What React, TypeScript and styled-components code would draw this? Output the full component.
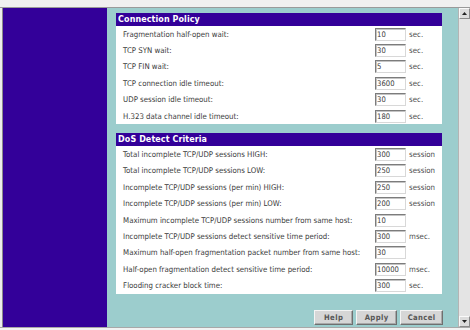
import React from "react"
import styled, { createGlobalStyle } from "styled-components"

const GlobalStyle = createGlobalStyle`
  html, body {
    margin: 0;
    padding: 0;
    background: #ececec;
  }
`

const FONT = `"DejaVu Sans", Tahoma, Verdana, sans-serif`

const Window = styled.div`
  width: 470px;
  height: 330px;
  display: flex;
  flex-direction: column;
  background: #ececec;
  font-family: ${FONT};
  font-stretch: condensed;
  overflow: hidden;
`

const TopStrip = styled.div`
  height: 7px;
  background: #f0f0f0;
  border-bottom: 1px solid #9a9a9a;
`

const BottomStrip = styled.div`
  height: 2px;
  background: #f2f2f2;
  border-top: 1px solid #a8a8a8;
`

const Body = styled.div`
  flex: 1;
  display: flex;
  padding-left: 2px;
  min-height: 0;
`

const Sidebar = styled.div`
  width: 105px;
  background: #330099;
  border-left: 1px solid #8a8a8a;
`

const Main = styled.div`
  flex: 1;
  background: #9ccdcd;
  padding: 5px 15px 0 9px;
  display: flex;
  flex-direction: column;
`

const Panel = styled.section<{ $gap?: number }>`
  width: 326px;
  margin-bottom: ${p => p.$gap ?? 0}px;
`

const PanelHeader = styled.h2`
  margin: 0;
  height: 13px;
  line-height: 13px;
  padding-left: 2px;
  background: #330099;
  color: #ffffff;
  font-size: 8.9px;
  font-weight: bold;
  letter-spacing: 0.1px;
`

const PanelBody = styled.div`
  background: #ffffff;
`

const Row = styled.div`
  display: grid;
  grid-template-columns: 249px 31px 35px;
  column-gap: 3px;
  align-items: center;
  height: 16.4px;
  padding-left: 7px;
  font-size: 7.8px;
  color: #3a3a3a;
`

const Label = styled.span`
  white-space: nowrap;
`

const Field = styled.input`
  box-sizing: border-box;
  width: 31px;
  height: 13px;
  margin: 0;
  padding: 0 1px;
  border: 1px solid;
  border-color: #7c7c7c #d8d8d8 #d8d8d8 #7c7c7c;
  box-shadow: inset 1px 1px 0 #c4c4c4;
  background: #ffffff;
  font-family: ${FONT};
  font-stretch: condensed;
  font-size: 7.6px;
  color: #3a3a3a;
  outline: none;
`

const Unit = styled.span`
  color: #4a4a4a;
  white-space: nowrap;
`

const ButtonBar = styled.div`
  width: 327px;
  margin-top: 16px;
  display: flex;
  justify-content: flex-end;
  gap: 3px;
`

const Button = styled.button<{ $w: number }>`
  width: ${p => p.$w}px;
  height: 15px;
  padding: 0;
  background: #d6d6d6;
  border: 1px solid;
  border-color: #f4f4f4 #6f6f6f #6f6f6f #f4f4f4;
  box-shadow: inset -1px -1px 0 #a8a8a8;
  font-family: ${FONT};
  font-stretch: condensed;
  font-size: 7.6px;
  font-weight: bold;
  letter-spacing: 0.4px;
  color: #555555;
`

const Scrollbar = styled.div`
  width: 11px;
  display: flex;
  flex-direction: column;
  justify-content: space-between;
  background: #e4e4e4;
  border-left: 1px solid #b4b4b4;
`

const ScrollButton = styled.div`
  height: 9px;
  display: flex;
  align-items: center;
  justify-content: center;
  background: #dcdcdc;
  border: 1px solid;
  border-color: #fafafa #8a8a8a #8a8a8a #fafafa;
`

const Arrow = ({ down }: { down?: boolean }) => (
  <svg width="5" height="3" viewBox="0 0 5 3">
    <path d={down ? "M0 0H5L2.5 3Z" : "M0 3H5L2.5 0Z"} fill="#222" />
  </svg>
)

type Setting = { label: string; value: string; unit?: string }

const connection: Setting[] = [
  { label: "Fragmentation half-open wait:", value: "10", unit: "sec." },
  { label: "TCP SYN wait:", value: "30", unit: "sec." },
  { label: "TCP FIN wait:", value: "5", unit: "sec." },
  { label: "TCP connection idle timeout:", value: "3600", unit: "sec." },
  { label: "UDP session idle timeout:", value: "30", unit: "sec." },
  { label: "H.323 data channel idle timeout:", value: "180", unit: "sec." },
]

const dos: Setting[] = [
  { label: "Total incomplete TCP/UDP sessions HIGH:", value: "300", unit: "session" },
  { label: "Total incomplete TCP/UDP sessions LOW:", value: "250", unit: "session" },
  { label: "Incomplete TCP/UDP sessions (per min) HIGH:", value: "250", unit: "session" },
  { label: "Incomplete TCP/UDP sessions (per min) LOW:", value: "200", unit: "session" },
  { label: "Maximum incomplete TCP/UDP sessions number from same host:", value: "10" },
  { label: "Incomplete TCP/UDP sessions detect sensitive time period:", value: "300", unit: "msec." },
  { label: "Maximum half-open fragmentation packet number from same host:", value: "30" },
  { label: "Half-open fragmentation detect sensitive time period:", value: "10000", unit: "msec." },
  { label: "Flooding cracker block time:", value: "300", unit: "sec." },
]

const SettingRows = ({ items }: { items: Setting[] }) => (
  <PanelBody>
    {items.map(s => (
      <Row key={s.label}>
        <Label>{s.label}</Label>
        <Field defaultValue={s.value} />
        <Unit>{s.unit}</Unit>
      </Row>
    ))}
  </PanelBody>
)

export default function App() {
  return (
    <Window>
      <GlobalStyle />
      <TopStrip />
      <Body>
        <Sidebar />
        <Main>
          <Panel $gap={9}>
            <PanelHeader>Connection Policy</PanelHeader>
            <SettingRows items={connection} />
          </Panel>
          <Panel>
            <PanelHeader>DoS Detect Criteria</PanelHeader>
            <SettingRows items={dos} />
          </Panel>
          <ButtonBar>
            <Button $w={39}>Help</Button>
            <Button $w={41}>Apply</Button>
            <Button $w={43}>Cancel</Button>
          </ButtonBar>
        </Main>
        <Scrollbar>
          <ScrollButton>
            <Arrow />
          </ScrollButton>
          <ScrollButton>
            <Arrow down />
          </ScrollButton>
        </Scrollbar>
      </Body>
      <BottomStrip />
    </Window>
  )
}
